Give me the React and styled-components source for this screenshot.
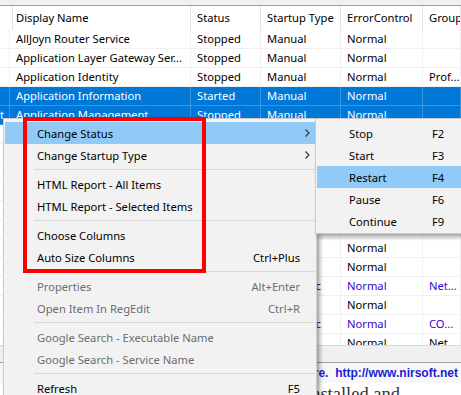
import styled, { createGlobalStyle } from 'styled-components';

const GlobalStyle = createGlobalStyle`
  html, body {
    margin: 0;
    padding: 0;
    background: #ffffff;
  }
  body {
    font-family: "Noto Sans", "Open Sans", sans-serif;
    font-size: 11.2px;
  }
`;

const Screen = styled.div`
  position: relative;
  width: 461px;
  height: 395px;
  overflow: hidden;
  background: #ffffff;
  display: flex;
  flex-direction: column;
`;

const TopBand = styled.div`
  height: 5px;
  flex: none;
  background: #f0f0f0;
  border-bottom: 1px solid #a0a0a0;
`;

const ListView = styled.div`
  height: 339px;
  flex: none;
  overflow: hidden;
  background: #ffffff;
`;

const COLUMNS = '10px 181px 70px 80px 82px 1fr';

const HeaderRow = styled.div`
  display: grid;
  grid-template-columns: ${COLUMNS};
  height: 24px;
  line-height: 24px;
  color: #000;
`;

const HeaderCell = styled.div`
  padding: 0 6px;
  border-right: 1px solid #e5e5e5;
  white-space: nowrap;
  overflow: hidden;
`;

const Row = styled.div`
  display: grid;
  grid-template-columns: ${COLUMNS};
  height: 19px;
  line-height: 18px;
  box-sizing: border-box;
  border-bottom: 1px solid ${(p) => (p.$selected ? '#3a95df' : '#f0f0f0')};
  background: ${(p) => (p.$selected ? '#0078d7' : '#ffffff')};
  color: ${(p) => (p.$selected ? '#ffffff' : p.$running ? '#3a00d8' : '#000000')};
`;

const Cell = styled.div`
  padding: 0 ${(p) => (p.$tail ? '0' : '6px')};
  border-right: 1px solid ${(p) => (p.$selected ? '#3a95df' : '#f0f0f0')};
  white-space: nowrap;
  overflow: hidden;
`;

const ScrollBand = styled.div`
  height: 16px;
  flex: none;
  background: #f0f0f0;
  border-top: 1px solid #d9d9d9;
`;

const StatusBar = styled.div`
  height: 20px;
  flex: none;
  display: flex;
  align-items: center;
  justify-content: flex-end;
  padding-right: 3px;
  background: #f7f7f7;
  border-top: 1px solid #a0a0a0;
  font-family: "Liberation Sans", Arial, sans-serif;
  font-weight: bold;
  font-size: 12px;
  color: #1c1cd6;
  white-space: pre;
`;

const PageText = styled.div`
  flex: none;
  padding-left: 306px;
  padding-top: 2px;
  font-family: "Liberation Serif", "Times New Roman", serif;
  font-size: 18.5px;
  line-height: 18px;
  color: #333333;
  white-space: nowrap;
`;

const Menu = styled.div`
  position: absolute;
  left: 3px;
  top: 118px;
  width: 310px;
  height: 300px;
  background: #f2f2f2;
  border: 1px solid #cccccc;
  padding: 3px 1px 0 1px;
  box-shadow: 3px 3px 4px rgba(0, 0, 0, 0.35);
  color: #000;
`;

const SubMenu = styled.div`
  position: absolute;
  left: 315px;
  top: 118px;
  width: 170px;
  background: #f2f2f2;
  border: 1px solid #cccccc;
  padding: 3px 1px 1px 1px;
  box-shadow: 3px 3px 4px rgba(0, 0, 0, 0.35);
  color: #000;
`;

const MenuItem = styled.div`
  display: flex;
  align-items: center;
  height: 22px;
  padding: 0 15px 0 32px;
  white-space: nowrap;
  background: ${(p) => (p.$hot ? '#91c9f7' : 'transparent')};
  color: ${(p) => (p.$disabled ? '#6d6d6d' : '#000000')};
`;

const SubItem = styled.div`
  display: grid;
  grid-template-columns: 83px auto;
  align-items: center;
  height: 22px;
  padding-left: 32px;
  white-space: nowrap;
  background: ${(p) => (p.$hot ? '#91c9f7' : 'transparent')};
`;

const Shortcut = styled.span`
  margin-left: auto;
`;

const Arrow = styled.svg`
  margin-left: auto;
  margin-right: -10px;
`;

const Separator = styled.div`
  height: 7px;
  display: flex;
  align-items: center;
  padding-left: 29px;
  &::after {
    content: '';
    flex: 1;
    height: 1px;
    background: #d7d7d7;
  }
`;

const Highlight = styled.div`
  position: absolute;
  left: 23px;
  top: 117px;
  width: 183px;
  height: 156px;
  box-sizing: border-box;
  border: 4px solid #ff0000;
  pointer-events: none;
`;

const rows = [
  ['', 'AllJoyn Router Service', 'Stopped', 'Manual', 'Normal', ''],
  ['', 'Application Layer Gateway Ser...', 'Stopped', 'Manual', 'Normal', ''],
  ['', 'Application Identity', 'Stopped', 'Manual', 'Normal', 'Prof...'],
  ['', 'Application Information', 'Started', 'Manual', 'Normal', '', 'sel'],
  ['t', 'Application Management', 'Stopped', 'Manual', 'Normal', '', 'sel'],
  ['', 'AppX Deployment Service (AppX...', 'Stopped', 'Manual', 'Normal', ''],
  ['', 'Windows Audio Endpoint Builder', 'Started', 'Automatic', 'Normal', '', 'run'],
  ['', 'Windows Audio', 'Started', 'Automatic', 'Normal', '', 'run'],
  ['', 'Cellular Time', 'Stopped', 'Manual', 'Normal', ''],
  ['', 'ActiveX Installer (AxInstSV)', 'Stopped', 'Manual', 'Normal', ''],
  ['', 'BitLocker Drive Encryption Ser...', 'Stopped', 'Manual', 'Normal', ''],
  ['', 'Block Level Backup Engine Ser...', 'Stopped', 'Manual', 'Normal', ''],
  ['', 'Bluetooth Handsfree Service', 'Stopped', 'Manual', 'Normal', ''],
  ['', 'Base Filtering Engine', 'Started', 'Automatic', 'Normal', 'Net...', 'run'],
  ['', 'Background Intelligent Transfe...', 'Stopped', 'Manual', 'Normal', ''],
  ['', 'Background Tasks Infrastructu...', 'Started', 'Automatic', 'Normal', 'CO...', 'run'],
  ['', 'Bluetooth Support Service', 'Stopped', 'Manual', 'Normal', 'Net...'],
];

const headers = ['', 'Display Name', 'Status', 'Startup Type', 'ErrorControl', 'Group'];

const menu = [
  { label: 'Change Status', sub: true, hot: true },
  { label: 'Change Startup Type', sub: true },
  'sep',
  { label: 'HTML Report - All Items' },
  { label: 'HTML Report - Selected Items' },
  'sep',
  { label: 'Choose Columns' },
  { label: 'Auto Size Columns', key: 'Ctrl+Plus' },
  'sep',
  { label: 'Properties', key: 'Alt+Enter', disabled: true },
  { label: 'Open Item In RegEdit', key: 'Ctrl+R', disabled: true },
  'sep',
  { label: 'Google Search - Executable Name', disabled: true },
  { label: 'Google Search - Service Name', disabled: true },
  'sep',
  { label: 'Refresh', key: 'F5' },
];

const statusItems = [
  ['Stop', 'F2'],
  ['Start', 'F3'],
  ['Restart', 'F4', true],
  ['Pause', 'F6'],
  ['Continue', 'F9'],
];

function ChevronRight() {
  return (
    <Arrow width="5" height="8" viewBox="0 0 5 8">
      <path d="M0.5 0.5 L4 4 L0.5 7.5" fill="none" stroke="#333" strokeWidth="1.1" />
    </Arrow>
  );
}

export default function App() {
  return (
    <>
      <GlobalStyle />
      <Screen>
        <TopBand />
        <ListView>
          <HeaderRow>
            {headers.map((h, i) => (
              <HeaderCell key={i}>{h}</HeaderCell>
            ))}
          </HeaderRow>
          {rows.map((r, i) => {
            const sel = r[6] === 'sel';
            return (
              <Row key={i} $selected={sel} $running={r[6] === 'run'}>
                {r.slice(0, 6).map((c, j) => (
                  <Cell key={j} $selected={sel} $tail={j === 0}>
                    {c}
                  </Cell>
                ))}
              </Row>
            );
          })}
        </ListView>
        <ScrollBand />
        <StatusBar>NirSoft Freeware.  http://www.nirsoft.net</StatusBar>
        <PageText>installed and</PageText>

        <Menu>
          {menu.map((m, i) =>
            m === 'sep' ? (
              <Separator key={i} />
            ) : (
              <MenuItem key={i} $hot={m.hot} $disabled={m.disabled}>
                {m.label}
                {m.key && <Shortcut>{m.key}</Shortcut>}
                {m.sub && <ChevronRight />}
              </MenuItem>
            )
          )}
        </Menu>

        <SubMenu>
          {statusItems.map(([label, key, hot]) => (
            <SubItem key={label} $hot={hot}>
              <span>{label}</span>
              <span>{key}</span>
            </SubItem>
          ))}
        </SubMenu>

        <Highlight />
      </Screen>
    </>
  );
}
